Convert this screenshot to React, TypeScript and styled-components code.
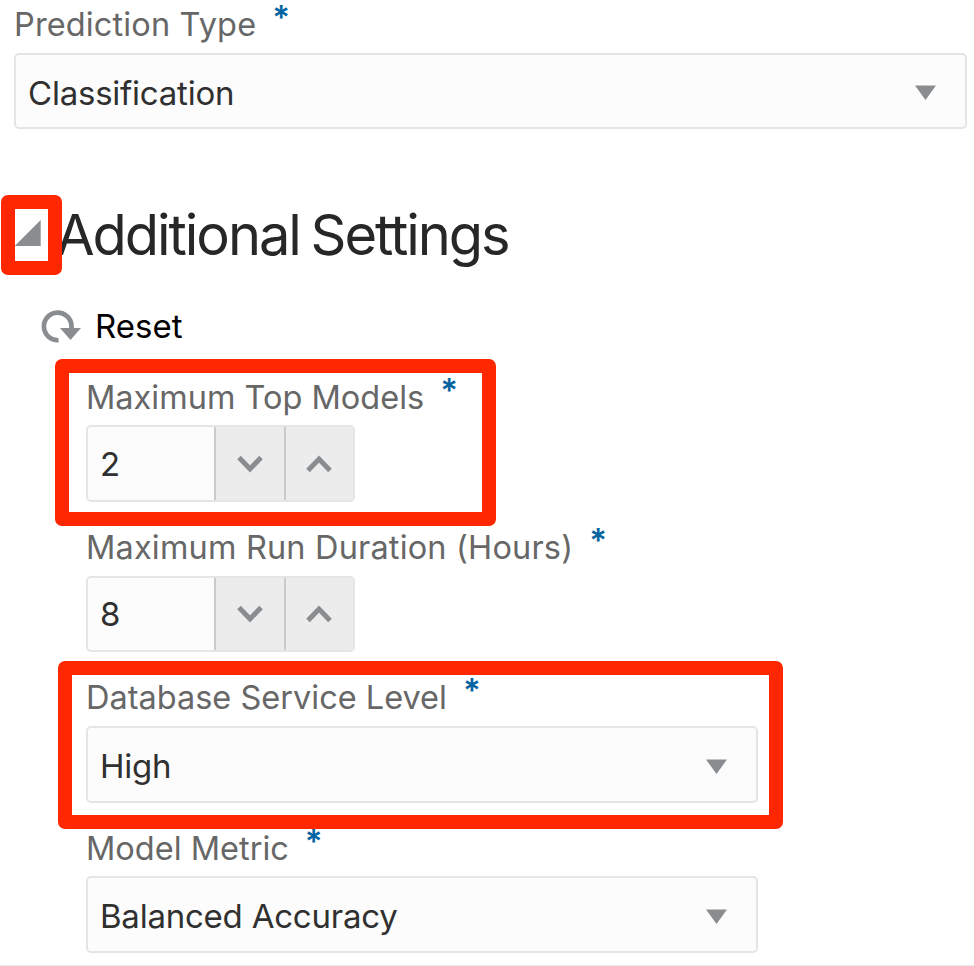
import React from 'react';
import styled, { createGlobalStyle } from 'styled-components';

const GlobalStyle = createGlobalStyle`
  * { box-sizing: border-box; }
  body {
    margin: 0;
    background: #fff;
    font-family: Inter, "Liberation Sans", sans-serif;
    font-feature-settings: "calt" 0;
    overflow: hidden;
  }
`;

const Page = styled.main`
  width: 974px;
  height: 966px;
  border-bottom: 1px solid #ebebeb;
`;

const Field = styled.div<{ $height: number; $inset?: number }>`
  display: flex;
  flex-direction: column;
  height: ${p => p.$height}px;
  margin-left: ${p => p.$inset ?? 86}px;
`;

const Label = styled.label<{ $tracking?: number; $height?: number; $drop?: number }>`
  display: flex;
  flex: none;
  align-items: flex-end;
  height: ${p => p.$height ?? 50}px;
  padding-bottom: ${p => p.$drop ?? 6}px;
  line-height: 45px;
  font-size: 32.5px;
  letter-spacing: ${p => p.$tracking ?? 0}px;
  color: #676767;
  white-space: nowrap;
`;

const Required = styled.span`
  margin-left: 16px;
  margin-bottom: 15px;
  line-height: 29px;
  font-size: 33px;
  font-weight: 600;
  letter-spacing: 0;
  color: #0464a2;
`;

const Select = styled.div<{ $width: number; $height?: number }>`
  display: flex;
  align-items: center;
  justify-content: space-between;
  flex: none;
  width: ${p => p.$width}px;
  height: ${p => p.$height ?? 77}px;
  padding: 3px 28px 0 12px;
  border: 2px solid #e5e5e5;
  border-radius: 5px;
  background: #fcfcfc;
`;

const Value = styled.span`
  font-size: 33px;
  line-height: 40px;
  letter-spacing: -0.23px;
  color: #303030;
`;

const Caret = styled.svg`
  width: 22px;
  height: 15px;
`;

const Stepper = styled.div<{ $height: number }>`
  display: grid;
  grid-template-columns: 1fr 70px 69px;
  flex: none;
  width: 269px;
  height: ${p => p.$height}px;
  border: 2px solid #e5e5e5;
  border-radius: 5px;
  overflow: hidden;
  background: #fcfcfc;
`;

const StepValue = styled.div`
  display: flex;
  align-items: center;
  padding: 0 0 0 12px;
`;

const StepButton = styled.button`
  display: flex;
  align-items: center;
  justify-content: center;
  padding: 0 1px 0 0;
  border: 0;
  border-left: 2px solid #c9cacb;
  background: #ececec;
`;

const SectionHeader = styled.header`
  display: flex;
  align-items: center;
  height: 84px;
  margin-top: 20px;
  padding-left: 14px;
`;

const Disclosure = styled.svg`
  flex: none;
  width: 27px;
  height: 27px;
  margin-top: -5px;
`;

const Title = styled.h1`
  margin: 0 0 0 15px;
  font-size: 56px;
  line-height: 68px;
  font-weight: 400;
  letter-spacing: -2.05px;
  word-spacing: -3px;
  color: #272727;
  white-space: nowrap;
`;

const ResetButton = styled.button`
  display: flex;
  align-items: center;
  height: 40px;
  margin: 29px 0 29px 40px;
  padding: 0;
  border: 0;
  background: none;
  font: 400 33px/40px Inter, "Liberation Sans", sans-serif;
  color: #000;
`;

const ResetIcon = styled.svg`
  width: 42px;
  height: 40px;
  margin-right: 13px;
`;

const Highlight = styled.div<{ $x: number; $y: number; $w: number; $h: number }>`
  position: absolute;
  left: ${p => p.$x}px;
  top: ${p => p.$y}px;
  width: ${p => p.$w}px;
  height: ${p => p.$h}px;
  border: 14px solid #ff2700;
  border-radius: 7px;
  pointer-events: none;
`;

const DownCaret = () => (
  <Caret viewBox="0 0 22 15">
    <path d="M0 0.5H21L10.5 15Z" fill="#898d8f" />
  </Caret>
);

const Chevron = ({ up }: { up?: boolean }) => (
  <svg width="26" height="18" viewBox="0 0 26 18" fill="none" stroke="#8a8d8f" strokeWidth="5">
    <path d={up ? 'M2 15.5L13 4L24 15.5' : 'M2 2.5L13 14L24 2.5'} />
  </svg>
);

function NumberInput({ value, height }: { value: number; height: number }) {
  return (
    <Stepper $height={height}>
      <StepValue><Value>{value}</Value></StepValue>
      <StepButton aria-label="Decrease"><Chevron /></StepButton>
      <StepButton aria-label="Increase"><Chevron up /></StepButton>
    </Stepper>
  );
}

export default function App() {
  return (
    <>
      <GlobalStyle />
      <Page>
        <Field $height={173} $inset={14}>
          <Label $height={53} $tracking={0.14}>Prediction Type<Required>*</Required></Label>
          <Select $width={953} $height={76}><Value>Classification</Value><DownCaret /></Select>
        </Field>
        <SectionHeader>
          <Disclosure viewBox="0 0 27 27"><path d="M0.7 27L26.7 1V27Z" fill="#8a8d8f" /></Disclosure>
          <Title>Additional Settings</Title>
        </SectionHeader>
        <ResetButton>
          <ResetIcon viewBox="0 0 42 40">
            <path d="M18.6 34.2A13.8 13.8 0 1 1 31.5 20V23" fill="none" stroke="#8a8d8f" strokeWidth="4.7" />
            <path d="M20 22H41L30.5 34Z" fill="#8a8d8f" />
          </ResetIcon>
          Reset
        </ResetButton>
        <Field $height={151}>
          <Label $drop={5}>Maximum Top Models<Required>*</Required></Label>
          <NumberInput value={2} height={77} />
        </Field>
        <Field $height={150}>
          <Label $tracking={0.17}>Maximum Run Duration (Hours)<Required>*</Required></Label>
          <NumberInput value={8} height={76} />
        </Field>
        <Field $height={150}>
          <Label>Database Service Level<Required>*</Required></Label>
          <Select $width={672}><Value>High</Value><DownCaret /></Select>
        </Field>
        <Field $height={127}>
          <Label $drop={5}>Model Metric<Required>*</Required></Label>
          <Select $width={672}><Value>Balanced Accuracy</Value><DownCaret /></Select>
        </Field>
        <Highlight $x={1} $y={195} $w={61} $h={80} />
        <Highlight $x={55} $y={359} $w={441} $h={167} />
        <Highlight $x={57.5} $y={661} $w={725.5} $h={168} />
      </Page>
    </>
  );
}
